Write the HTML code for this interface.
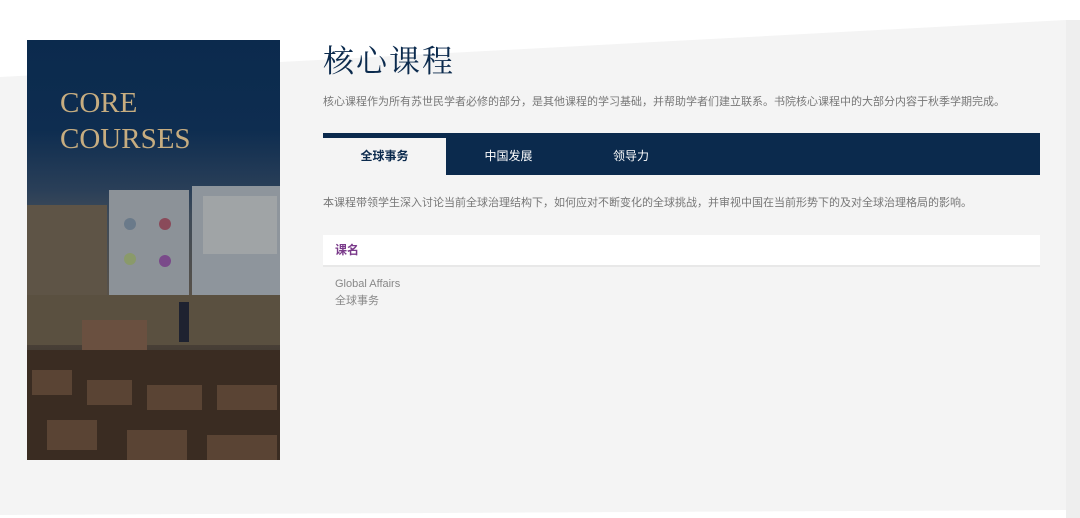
<!DOCTYPE html>
<html><head><meta charset="utf-8"><style>
*{margin:0;padding:0;box-sizing:border-box}
body{width:1080px;height:518px;overflow:hidden;position:relative;background:#f4f4f4;font-family:"Liberation Sans","Noto Sans CJK SC",sans-serif}
.bg{position:absolute;left:0;top:0}
.img{position:absolute;left:27px;top:40px;width:253px;height:420px;overflow:hidden;background:linear-gradient(#0b2a4d 0,#0e2d50 90px,#2a3f58 150px,#3d4a58 175px,#5a5248 260px,#3e352d 330px,#2e2620 420px)}
.core{position:absolute;left:33px;top:45px;color:#c7ad80;font-family:"Liberation Serif",serif;font-size:29px;line-height:36px}
h1{position:absolute;left:323px;top:36px;font-family:"Noto Serif CJK SC",serif;font-weight:400;font-size:31px;color:#0b2a4d;letter-spacing:2px}
.p1{position:absolute;left:323px;top:93px;font-size:11px;color:#777}
.tabs{position:absolute;left:323px;top:133px;width:717px;height:42px;background:#0b2a4d}
.tab{position:absolute;top:5px;height:37px;line-height:37px;font-size:12px;color:#fff;text-align:center}
.p2{position:absolute;left:323px;top:194px;font-size:11px;color:#777}
.th{position:absolute;left:323px;top:235px;width:717px;height:32px;background:#fff;border-bottom:2px solid #e8e8e8;padding-left:12px;line-height:31px;font-size:12px;font-weight:bold;color:#7a3a8a}
.td{position:absolute;left:335px;top:276px;font-size:11px;color:#888;line-height:17px}
</style></head><body>
<svg class="bg" width="1080" height="518"><polygon points="0,0 1080,0 1080,518 1066,518 1066,20 0,77" fill="#fff"/><rect x="1066" y="20" width="14" height="498" fill="#eee"/><polygon points="0,518 0,515 1066,510 1066,518" fill="#fff"/></svg>
<div class="img">
<svg width="253" height="420" style="position:absolute;left:0;top:0">
<rect x="0" y="165" width="80" height="120" fill="#5e5446"/>
<rect x="82" y="150" width="80" height="105" fill="#8c9298"/>
<rect x="165" y="146" width="88" height="122" fill="#8e959c"/>
<rect x="176" y="156" width="74" height="58" fill="#a0a4a6"/>
<circle cx="103" cy="184" r="6" fill="#6a7a8a"/><circle cx="138" cy="184" r="6" fill="#8a4a5a"/>
<circle cx="103" cy="219" r="6" fill="#8a9a6a"/><circle cx="138" cy="221" r="6" fill="#7a4a8a"/>
<rect x="0" y="255" width="253" height="50" fill="#5a5040"/>
<rect x="55" y="280" width="65" height="45" fill="#6a5040"/>
<rect x="0" y="310" width="253" height="110" fill="#3a2c22"/>
<g fill="#5a4434"><rect x="5" y="330" width="40" height="25"/><rect x="60" y="340" width="45" height="25"/><rect x="120" y="345" width="55" height="25"/><rect x="190" y="345" width="60" height="25"/><rect x="20" y="380" width="50" height="30"/><rect x="100" y="390" width="60" height="30"/><rect x="180" y="395" width="70" height="25"/></g>
<rect x="152" y="262" width="10" height="40" fill="#1e2230"/>
</svg>
<div class="core">CORE<br>COURSES</div>
</div>
<h1>核心课程</h1>
<div class="p1">核心课程作为所有苏世民学者必修的部分，是其他课程的学习基础，并帮助学者们建立联系。书院核心课程中的大部分内容于秋季学期完成。</div>
<div class="tabs">
<div class="tab" style="left:0;width:123px;background:#f4f4f4;color:#0b2a4d;font-weight:bold">全球事务</div>
<div class="tab" style="left:123px;width:125px">中国发展</div>
<div class="tab" style="left:248px;width:120px">领导力</div>
</div>
<div class="p2">本课程带领学生深入讨论当前全球治理结构下，如何应对不断变化的全球挑战，并审视中国在当前形势下的及对全球治理格局的影响。</div>
<div class="th">课名</div>
<div class="td">Global Affairs<br>全球事务</div>
</body></html>
